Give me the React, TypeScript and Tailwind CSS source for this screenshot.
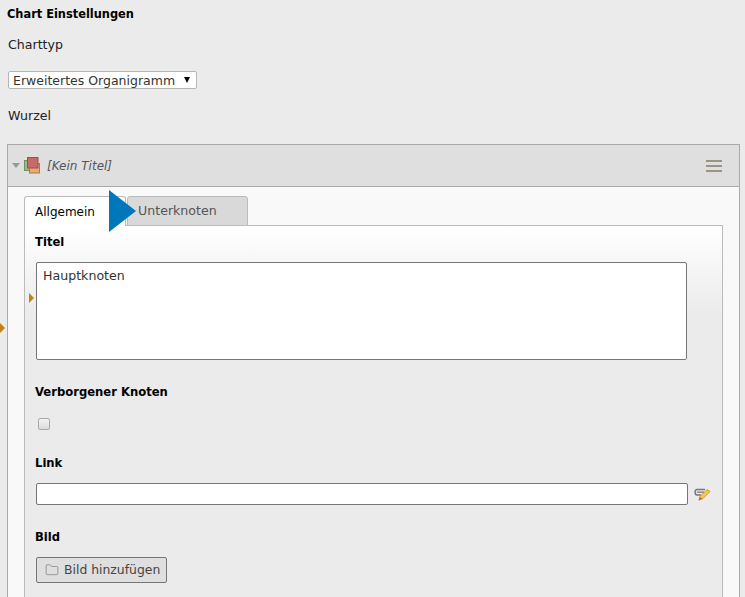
import { Folder } from "lucide-react";

const font = "font-['DejaVu_Sans',sans-serif]";

function Label({ children }: { children: React.ReactNode }) {
    return <div className="-ml-px text-[11.6px] font-bold leading-[16px] text-black">{children}</div>;
}

function NodeIcon() {
    return (
        <svg width="17" height="17" viewBox="0 0 17 17" className="shrink-0">
            <rect x="0.5" y="3.5" width="10" height="10" fill="#9dbb8a" stroke="#6f8f60" />
            <rect x="5.5" y="6.5" width="10" height="9.5" fill="#e9aa72" stroke="#a87a50" />
            <rect x="3.5" y="0.5" width="10.5" height="10.5" fill="#c96a6a" stroke="#8f5555" />
        </svg>
    );
}

function LinkIcon() {
    return (
        <svg width="17" height="13" viewBox="0 0 17 13" className="shrink-0">
            <path d="M11 1.5H3C0.5 1.5 0.5 7 3 7H7" fill="none" stroke="#777" strokeWidth="1.5" />
            <path d="M3 4.2H10" fill="none" stroke="#888" strokeWidth="1.5" />
            <path d="M5 12L6 8.5L13 1.5L16 3.5L9 10.5Z" fill="#f2c94c" stroke="#c98a1c" strokeWidth="0.8" />
            <path d="M4.5 12.5L5.7 8.8L8.5 11Z" fill="#b9772a" />
        </svg>
    );
}

export default function App() {
    return (
        <div className={`${font} relative h-[597px] w-[745px] overflow-hidden bg-[#ebebeb] text-[#222]`}>
            <div className="px-[7px] pt-[6px]">
                <div className="text-[11.4px] font-bold leading-[16px] text-black">Chart Einstellungen</div>
                <div className="mt-[15px] pl-[1px] text-[12.6px] leading-[16px]">Charttyp</div>
                <div className="mt-[18px] ml-[1px] flex h-[18px] w-[189px] items-center justify-between rounded-[2px] border border-[#b5b5b5] bg-white pl-[4px] pr-[6px] pt-[2px] text-[12.5px] text-[#333]">
                    <span>Erweitertes Organigramm</span>
                    <span className="mb-[2px] h-0 w-0 border-x-[3.5px] border-t-[6px] border-x-transparent border-t-black" />
                </div>
                <div className="mt-[19px] pl-[1px] text-[12.6px] leading-[16px]">Wurzel</div>

                {/* Panel */}
                <div className="mt-[20px] w-[733px] border border-[#aaaaaa] bg-[#f9f9f9]">
                    <div className="flex h-[42px] items-center border-b border-[#aaaaaa] bg-[#dfdfdf] pl-[4px] pr-[17px]">
                        <span className="mr-[4px] h-0 w-0 border-x-[4px] border-t-[5px] border-x-transparent border-t-[#999]" />
                        <NodeIcon />
                        <span className="ml-[6px] text-[12px] italic text-[#555560]">[Kein Titel]</span>
                        <div className="ml-auto flex w-[16px] flex-col gap-[3px]">
                            <span className="h-[2px] bg-[#999388]" />
                            <span className="h-[2px] bg-[#999388]" />
                            <span className="h-[2px] bg-[#999388]" />
                        </div>
                    </div>
                    <div className="pl-[16px] pr-[16px] pt-[9px]">
                        {/* Tabs */}
                        <div className="relative z-10 -mb-px flex items-end gap-[1px]">
                            <div className="flex h-[30px] w-[102px] items-center rounded-t-[3px] border border-b-0 border-[#bbbbbb] bg-white pl-[10px] text-[12px] text-black">
                                Allgemein
                            </div>
                            <div className="flex h-[30px] w-[121px] items-center rounded-t-[3px] border border-[#bbbbbb] bg-[#d9d9d9] pl-[10px] text-[12.6px] text-[#555]">
                                Unterknoten
                            </div>
                        </div>
                        <div className="h-[400px] border border-[#bbbbbb] bg-[linear-gradient(to_bottom,#ffffff_0,#ebebeb_90px)] px-[11px] pt-[8px]">
                            <Label>Titel</Label>
                            <div className="mt-[12px] h-[98px] w-[651px] rounded-[2px] border border-[#767676] bg-white px-[6px] py-[4px] text-[12.6px] leading-[17px] text-[#333]">
                                Hauptknoten
                            </div>
                            <div className="mt-[24px]"><Label>Verborgener Knoten</Label></div>
                            <div className="mt-[18px] ml-[2px] h-[12px] w-[12px] rounded-[2px] border border-[#aaaaaa] bg-gradient-to-b from-[#f2f2f2] to-[#dcdcdc]" />
                            <div className="mt-[25px]"><Label>Link</Label></div>
                            <div className="mt-[12px] flex items-center gap-[6px]">
                                <div className="h-[22px] w-[652px] rounded-[2px] border border-[#767676] bg-white" />
                                <LinkIcon />
                            </div>
                            <div className="mt-[24px]"><Label>Bild</Label></div>
                            <div className="mt-[12px] flex h-[26px] w-[131px] items-center gap-[5px] rounded-[2px] border border-[#767676] bg-[#dfdfdf] pl-[8px] text-[12.4px] text-[#444]">
                                <Folder size={14} strokeWidth={1} className="text-[#666]" />
                                Bild hinzufügen
                            </div>
                        </div>
                    </div>
                </div>
            </div>

            {/* Overlays */}
            <span className="absolute left-[109px] top-[190px] z-20 h-0 w-0 border-y-[21px] border-l-[27px] border-y-transparent border-l-[#0077bb]" />
            <span className="absolute left-[29px] top-[293px] h-0 w-0 border-y-[5px] border-l-[5px] border-y-transparent border-l-[#c47f17]" />
            <span className="absolute left-0 top-[323px] h-0 w-0 border-y-[5px] border-l-[5px] border-y-transparent border-l-[#c47f17]" />
        </div>
    );
}
